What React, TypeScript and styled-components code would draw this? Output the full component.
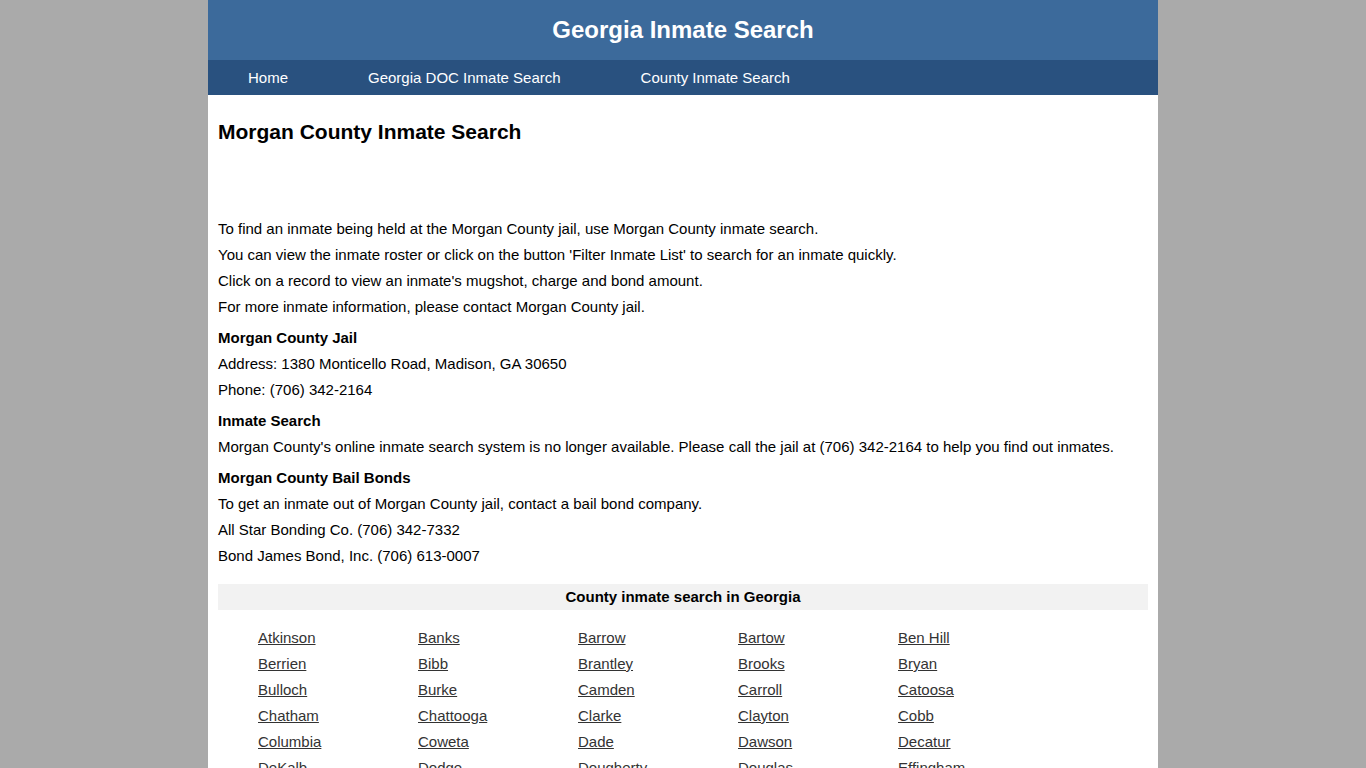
import styled, { createGlobalStyle } from 'styled-components'

const GlobalStyle = createGlobalStyle`
    html, body {
        margin: 0;
        padding: 0;
        background-color: #aaaaaa;
        font-family: "Liberation Sans", Arial, sans-serif;
    }
`

const Page = styled.div`
    width: 950px;
    margin: 0 auto;
    background-color: #ffffff;
    min-height: 768px;
`

const Header = styled.header`
    height: 60px;
    background-color: #3c6a9b;
    display: flex;
    justify-content: center;
    align-items: center;
`

const SiteTitle = styled.h1`
    margin: 0;
    color: #ffffff;
    font-size: 24px;
    font-weight: bold;
`

const Nav = styled.nav`
    height: 35px;
    background-color: #29517f;
    display: flex;
    align-items: center;
`

const NavLink = styled.a`
    color: #ffffff;
    font-size: 15px;
    text-decoration: none;
    padding: 0 40px;
`

const Content = styled.main`
    padding: 24px 10px 20px;
    color: #000000;
    font-size: 15px;
`

const PageTitle = styled.h2`
    margin: 0;
    font-size: 21px;
    font-weight: bold;
    line-height: 26px;
`

const AdSpace = styled.div`
    height: 71px;
`

const Para = styled.p`
    margin: 0;
    line-height: 26px;
`

const SubTitle = styled.h3`
    margin: 5px 0 0;
    font-size: 15px;
    font-weight: bold;
    line-height: 26px;
`

const CountyBar = styled.div`
    margin-top: 15px;
    height: 26px;
    background-color: #f2f2f2;
    display: flex;
    justify-content: center;
    align-items: center;
    font-weight: bold;
    font-size: 15px;
    line-height: 24px;
`

const CountyList = styled.ul`
    list-style: none;
    margin: 15px 0 0;
    padding: 0 0 0 40px;
    display: grid;
    grid-template-columns: repeat(5, 160px);
`

const CountyItem = styled.li`
    line-height: 26px;
`

const CountyLink = styled.a`
    color: #333333;
    text-decoration: underline;
    font-size: 15px;
`

const counties = [
    'Atkinson', 'Banks', 'Barrow', 'Bartow', 'Ben Hill',
    'Berrien', 'Bibb', 'Brantley', 'Brooks', 'Bryan',
    'Bulloch', 'Burke', 'Camden', 'Carroll', 'Catoosa',
    'Chatham', 'Chattooga', 'Clarke', 'Clayton', 'Cobb',
    'Columbia', 'Coweta', 'Dade', 'Dawson', 'Decatur',
    'DeKalb', 'Dodge', 'Dougherty', 'Douglas', 'Effingham',
    'Elbert', 'Fannin', 'Fayette', 'Floyd', 'Forsyth',
]

function App() {
    return (
        <>
            <GlobalStyle />
            <Page>
                <Header>
                    <SiteTitle>Georgia Inmate Search</SiteTitle>
                </Header>
                <Nav>
                    <NavLink href="#">Home</NavLink>
                    <NavLink href="#">Georgia DOC Inmate Search</NavLink>
                    <NavLink href="#">County Inmate Search</NavLink>
                </Nav>
                <Content>
                    <PageTitle>Morgan County Inmate Search</PageTitle>
                    <AdSpace />
                    <Para>To find an inmate being held at the Morgan County jail, use Morgan County inmate search.</Para>
                    <Para>You can view the inmate roster or click on the button 'Filter Inmate List' to search for an inmate quickly.</Para>
                    <Para>Click on a record to view an inmate's mugshot, charge and bond amount.</Para>
                    <Para>For more inmate information, please contact Morgan County jail.</Para>

                    <SubTitle>Morgan County Jail</SubTitle>
                    <Para>Address: 1380 Monticello Road, Madison, GA 30650</Para>
                    <Para>Phone: (706) 342-2164</Para>

                    <SubTitle>Inmate Search</SubTitle>
                    <Para>Morgan County's online inmate search system is no longer available. Please call the jail at (706) 342-2164 to help you find out inmates.</Para>

                    <SubTitle>Morgan County Bail Bonds</SubTitle>
                    <Para>To get an inmate out of Morgan County jail, contact a bail bond company.</Para>
                    <Para>All Star Bonding Co. (706) 342-7332</Para>
                    <Para>Bond James Bond, Inc. (706) 613-0007</Para>

                    <CountyBar>County inmate search in Georgia</CountyBar>
                    <CountyList>
                        {counties.map((name) => (
                            <CountyItem key={name}>
                                <CountyLink href="#">{name}</CountyLink>
                            </CountyItem>
                        ))}
                    </CountyList>
                </Content>
            </Page>
        </>
    )
}

export default App
